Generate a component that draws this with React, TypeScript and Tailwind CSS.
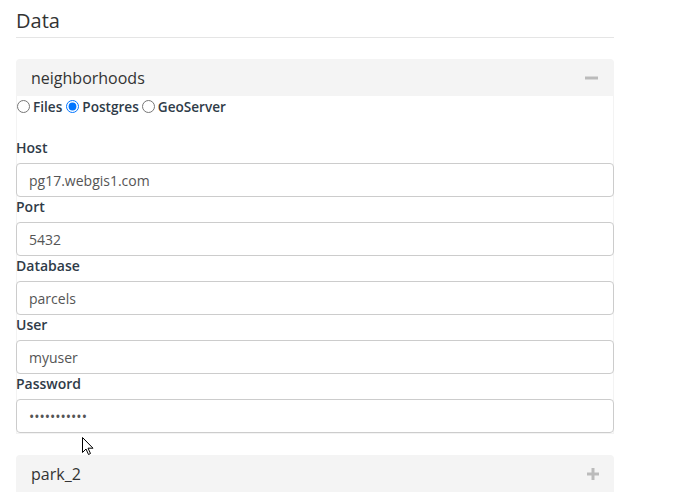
import React from 'react';

const fields = [
  { label: 'Host', value: 'pg17.webgis1.com', type: 'text' },
  { label: 'Port', value: '5432', type: 'text' },
  { label: 'Database', value: 'parcels', type: 'text' },
  { label: 'User', value: 'myuser', type: 'text' },
  { label: 'Password', value: 'secretpass1', type: 'password' },
];

const Minus = () => (
  <svg width="14" height="4" viewBox="0 0 14 4" className="block">
    <rect x="0" y="0.5" width="13" height="3" fill="#bbbbbb" />
  </svg>
);

const Plus = () => (
  <svg width="12" height="12" viewBox="0 0 12 12" className="block">
    <rect x="0" y="4.5" width="12" height="3" fill="#bbbbbb" />
    <rect x="4.5" y="0" width="3" height="12" fill="#bbbbbb" />
  </svg>
);

const PanelHeader: React.FC<{ title: string; open?: boolean }> = ({ title, open }) => (
  <div className="h-[37px] flex items-center justify-between bg-[#f4f4f4] rounded-t-[4px] pl-[15px] pr-[15px]">
    <span className="text-[16px] text-[#333]">{title}</span>
    {open ? <Minus /> : <Plus />}
  </div>
);

export default function App() {
  return (
    <div className="relative w-[688px] h-[492px] overflow-hidden bg-white pl-4 font-['Open_Sans',sans-serif]">
      <div className="w-[598px]">
        <h2 className="text-[20px] leading-[24px] pt-[9px] pb-[4px] text-[#333] border-b border-[#e5e5e5]">
          Data
        </h2>

        <div className="mt-[21px]">
          <PanelHeader title="neighborhoods" open />
          <div className="border border-t-0 border-[#f3f3f3]">
            {/* source type */}
            <div className="flex items-center h-[22px] text-[13.6px] font-semibold text-[#2f3b48] -ml-px">
              <label className="flex items-center">
                <input type="radio" name="src" className="m-0 ml-[1px] mr-[3px] w-[13px] h-[13px]" />
                Files
              </label>
              <label className="flex items-center ml-[4px]">
                <input type="radio" name="src" defaultChecked className="m-0 mr-[3px] w-[13px] h-[13px]" />
                Postgres
              </label>
              <label className="flex items-center ml-[3px]">
                <input type="radio" name="src" className="m-0 mr-[3px] w-[13px] h-[13px]" />
                GeoServer
              </label>
            </div>

            <div className="mt-[20px] -mx-px">
              {fields.map((f) => (
                <div key={f.label}>
                  <label className="block text-[14px] leading-[20px] font-semibold text-[#2f3b48] mb-[5px]">
                    {f.label}
                  </label>
                  <input
                    type={f.type}
                    defaultValue={f.value}
                    className="block w-full h-[34px] px-[12px] text-[14px] text-[#555] border border-[#cccccc] rounded-[4px] bg-white outline-none"
                  />
                </div>
              ))}
            </div>
          </div>
        </div>

        <div className="mt-[21px]">
          <PanelHeader title="park_2" />
        </div>
      </div>

      {/* mouse pointer */}
      <svg
        className="absolute left-[82px] top-[437px]"
        width="12"
        height="19"
        viewBox="0 0 12 19"
      >
        <path
          d="M0.5 0.5 L0.5 15.5 L4 12 L6.5 17.5 L8.5 16.5 L6 11.2 L11 11.2 Z"
          fill="white"
          stroke="black"
          strokeWidth="1"
          strokeLinejoin="round"
        />
      </svg>
    </div>
  );
}
